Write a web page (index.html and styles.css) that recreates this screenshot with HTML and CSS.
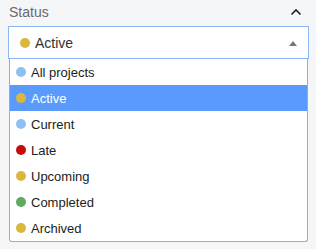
FILE: index.html
```html
<!DOCTYPE html>
<html lang="en">
<head>
  <meta charset="utf-8">
  <title>Status filter</title>
  <link rel="stylesheet" href="styles.css">
</head>
<body>
  <div class="field">
    <div class="field-head">
      <span class="label">Status</span>
      <svg class="collapse" width="12" height="8" viewBox="0 0 12 8">
        <path d="M1.5 6.5 L6 2 L10.5 6.5" fill="none" stroke="#222" stroke-width="1.6"/>
      </svg>
    </div>

    <div class="select">
      <span class="dot gold"></span>
      <span class="select-text">Active</span>
      <span class="caret"></span>
    </div>

    <ul class="menu">
      <li class="option"><span class="dot blue"></span>All projects</li>
      <li class="option selected"><span class="dot gold"></span>Active</li>
      <li class="option"><span class="dot blue"></span>Current</li>
      <li class="option"><span class="dot red"></span>Late</li>
      <li class="option"><span class="dot gold"></span>Upcoming</li>
      <li class="option"><span class="dot green"></span>Completed</li>
      <li class="option"><span class="dot gold"></span>Archived</li>
    </ul>
  </div>
</body>
</html>
```

FILE: styles.css
```css
body {
  margin: 0;
  background: #f5f6f8;
  font-family: "Liberation Sans", Arial, sans-serif;
  color: #333;
}

.field {
  padding: 0 7px 0 8px;
}

.field-head {
  height: 26px;
  display: flex;
  align-items: center;
  justify-content: space-between;
  padding: 0 7px 0 1px;
}

.label {
  font-size: 14px;
  color: #6a6a6a;
  margin-top: -2px;
}

.collapse {
  display: block;
  margin-top: -3px;
}

.select {
  height: 31px;
  border: 1px solid #8db6f6;
  background: #fff;
  display: flex;
  align-items: center;
  padding: 0 11px 0 11px;
}

.select .dot {
  width: 10px;
  height: 10px;
  margin-right: 5px;
}

.select-text {
  flex: 1;
  font-size: 14px;
  color: #333;
}

.caret {
  width: 0;
  height: 0;
  border-left: 4px solid transparent;
  border-right: 4px solid transparent;
  border-bottom: 5px solid #777;
  margin-top: 1px;
}

.menu {
  list-style: none;
  margin: 0 1px;
  padding: 0;
  background: #fff;
  border: 1px solid #a9a9a9;
  border-top: none;
  border-radius: 0 0 3px 3px;
}

.option {
  height: 26px;
  display: flex;
  align-items: center;
  padding-left: 6px;
  font-size: 13px;
  color: #222;
}

.option.selected {
  background: #5a9afc;
  color: #fff;
}

.dot {
  display: inline-block;
  width: 10px;
  height: 10px;
  border-radius: 50%;
  margin-right: 5px;
  flex: none;
}

.blue { background: #8fc0f2; }
.gold { background: #dbb73d; }
.red { background: #c70b0b; }
.green { background: #5cab5e; }
```
